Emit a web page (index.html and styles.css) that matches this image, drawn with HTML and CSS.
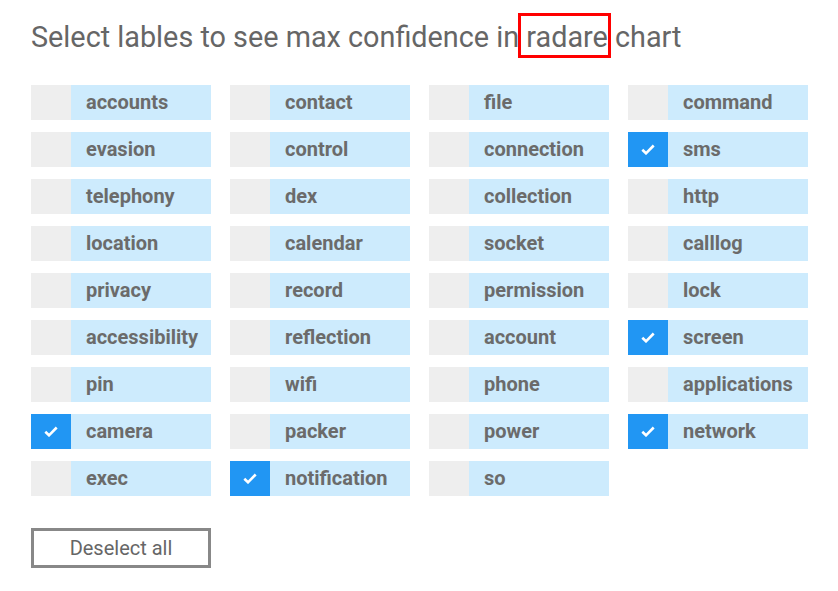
FILE: index.html
```html
<!DOCTYPE html>
<html>
<head>
<meta charset="utf-8">
<link rel="stylesheet" href="styles.css">
</head>
<body>
<div class="page">
  <h1 class="title">Select lables to see max confidence in <span class="mark">radare</span> chart</h1>
  <div class="grid">
    <div class="item"><span class="box"></span><span class="label">accounts</span></div>
    <div class="item"><span class="box"></span><span class="label">contact</span></div>
    <div class="item"><span class="box"></span><span class="label">file</span></div>
    <div class="item"><span class="box"></span><span class="label">command</span></div>

    <div class="item"><span class="box"></span><span class="label">evasion</span></div>
    <div class="item"><span class="box"></span><span class="label">control</span></div>
    <div class="item"><span class="box"></span><span class="label">connection</span></div>
    <div class="item checked"><span class="box"><svg viewBox="0 0 14 11" class="tick"><path d="M1.3 5.8 L5 9.3 L12.7 1.5" /></svg></span><span class="label">sms</span></div>

    <div class="item"><span class="box"></span><span class="label">telephony</span></div>
    <div class="item"><span class="box"></span><span class="label">dex</span></div>
    <div class="item"><span class="box"></span><span class="label">collection</span></div>
    <div class="item"><span class="box"></span><span class="label">http</span></div>

    <div class="item"><span class="box"></span><span class="label">location</span></div>
    <div class="item"><span class="box"></span><span class="label">calendar</span></div>
    <div class="item"><span class="box"></span><span class="label">socket</span></div>
    <div class="item"><span class="box"></span><span class="label">calllog</span></div>

    <div class="item"><span class="box"></span><span class="label">privacy</span></div>
    <div class="item"><span class="box"></span><span class="label">record</span></div>
    <div class="item"><span class="box"></span><span class="label">permission</span></div>
    <div class="item"><span class="box"></span><span class="label">lock</span></div>

    <div class="item"><span class="box"></span><span class="label">accessibility</span></div>
    <div class="item"><span class="box"></span><span class="label">reflection</span></div>
    <div class="item"><span class="box"></span><span class="label">account</span></div>
    <div class="item checked"><span class="box"><svg viewBox="0 0 14 11" class="tick"><path d="M1.3 5.8 L5 9.3 L12.7 1.5" /></svg></span><span class="label">screen</span></div>

    <div class="item"><span class="box"></span><span class="label">pin</span></div>
    <div class="item"><span class="box"></span><span class="label">wifi</span></div>
    <div class="item"><span class="box"></span><span class="label">phone</span></div>
    <div class="item"><span class="box"></span><span class="label">applications</span></div>

    <div class="item checked"><span class="box"><svg viewBox="0 0 14 11" class="tick"><path d="M1.3 5.8 L5 9.3 L12.7 1.5" /></svg></span><span class="label">camera</span></div>
    <div class="item"><span class="box"></span><span class="label">packer</span></div>
    <div class="item"><span class="box"></span><span class="label">power</span></div>
    <div class="item checked"><span class="box"><svg viewBox="0 0 14 11" class="tick"><path d="M1.3 5.8 L5 9.3 L12.7 1.5" /></svg></span><span class="label">network</span></div>

    <div class="item"><span class="box"></span><span class="label">exec</span></div>
    <div class="item checked"><span class="box"><svg viewBox="0 0 14 11" class="tick"><path d="M1.3 5.8 L5 9.3 L12.7 1.5" /></svg></span><span class="label">notification</span></div>
    <div class="item"><span class="box"></span><span class="label">so</span></div>
  </div>
  <button class="deselect">Deselect all</button>
</div>
</body>
</html>
```

FILE: styles.css
```css
html, body {
  margin: 0;
  padding: 0;
  background: #fff;
}
.page {
  padding: 18px 31px 0 31px;
  font-family: Roboto, "Liberation Sans", sans-serif;
  color: #666;
}
.title {
  margin: 0;
  font-size: 28.8px;
  font-weight: 400;
  line-height: 38px;
  color: #666;
}
.mark {
  position: relative;
}
.mark::after {
  content: "";
  position: absolute;
  left: -8px;
  right: -3px;
  top: -7px;
  bottom: -4px;
  border: 3px solid #f00;
}
.grid {
  display: grid;
  grid-template-columns: repeat(4, 180px);
  column-gap: 19px;
  row-gap: 12px;
  margin-top: 29px;
}
.item {
  display: flex;
  height: 35px;
  background: #cdebfd;
}
.box {
  width: 40px;
  flex: none;
  background: #eeeeee;
  display: flex;
  align-items: center;
  justify-content: center;
}
.checked .box {
  background: #2196f3;
}
.tick {
  width: 14px;
  height: 11px;
}
.tick path {
  fill: none;
  stroke: #fff;
  stroke-width: 2.6;
}
.label {
  padding-left: 15px;
  font-size: 20px;
  font-weight: 700;
  line-height: 35px;
  color: #6b6b6b;
  white-space: nowrap;
}
.deselect {
  display: block;
  margin-top: 32px;
  width: 180px;
  height: 40px;
  border: 3px solid #888;
  background: #fff;
  font-family: Roboto, "Liberation Sans", sans-serif;
  font-size: 20px;
  color: #666;
  padding: 0;
}
```
